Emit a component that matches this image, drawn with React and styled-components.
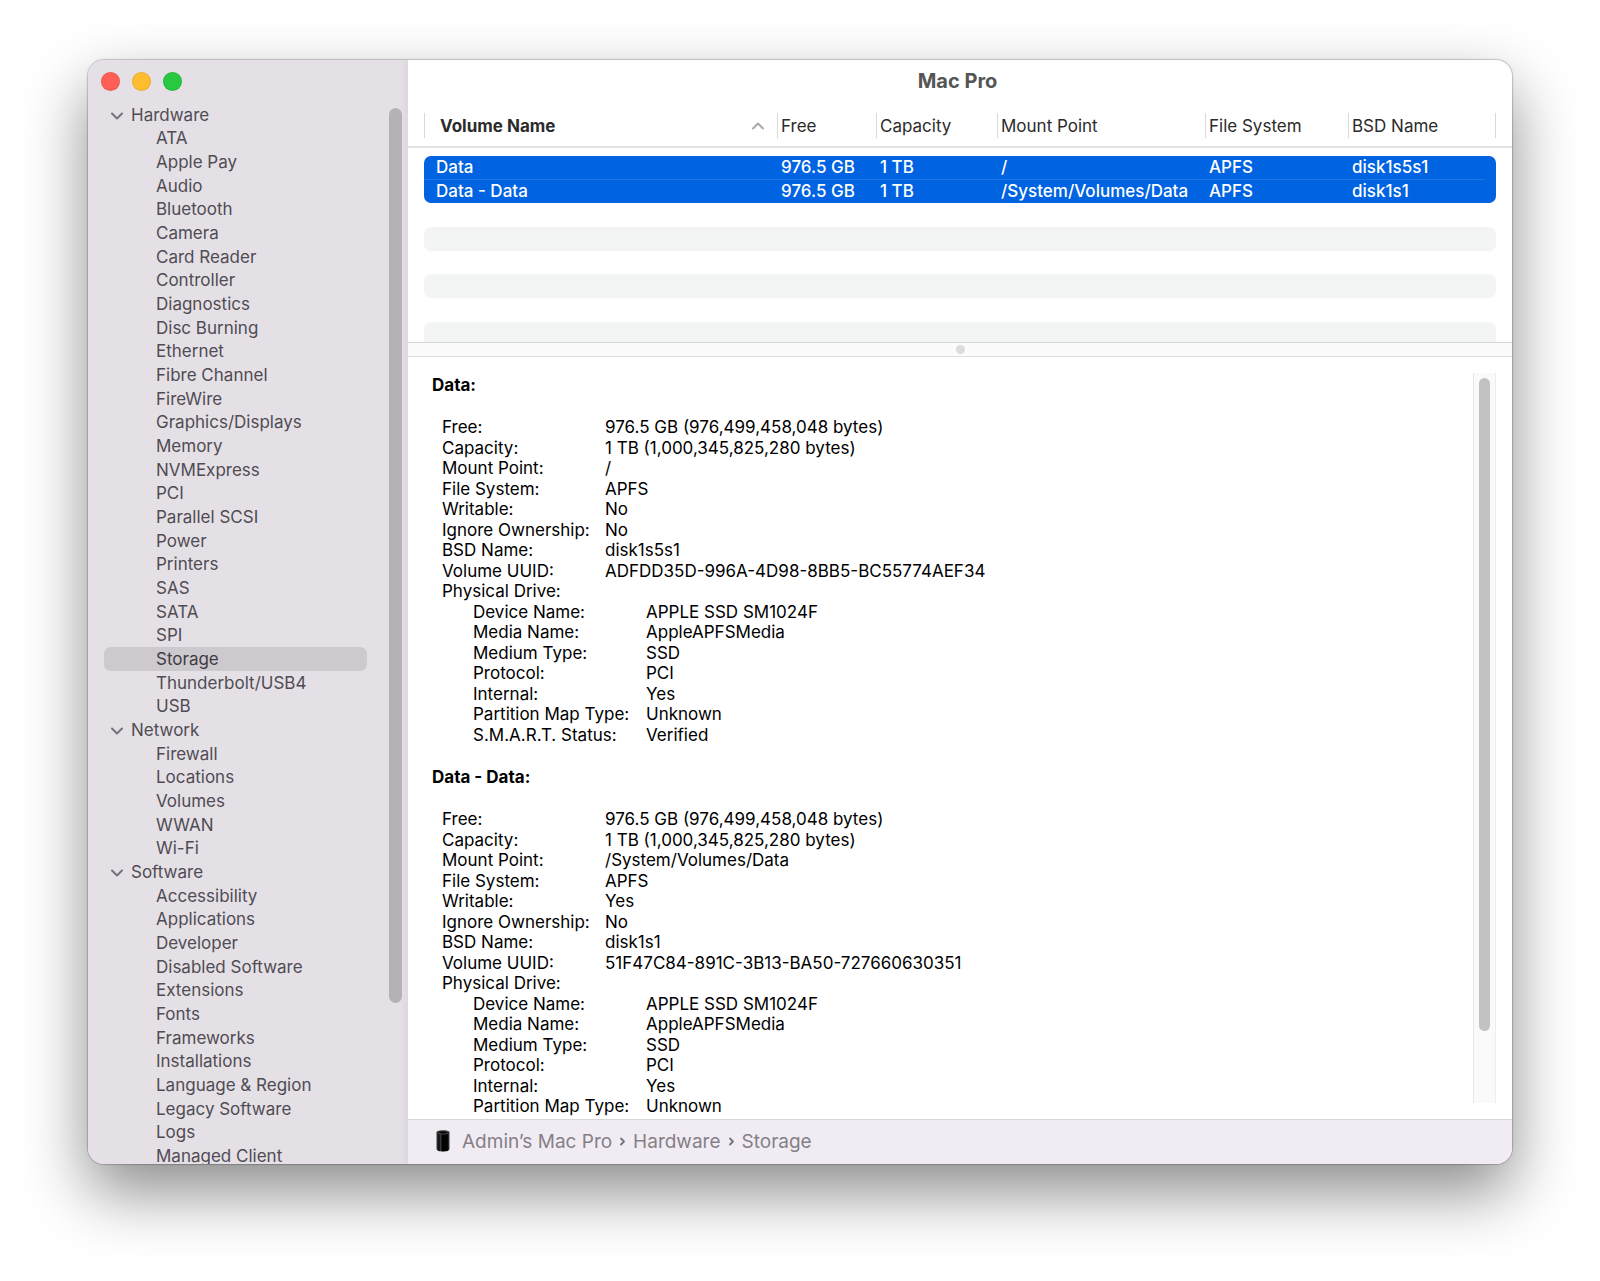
import React, { useState } from 'react';
import styled, { createGlobalStyle } from 'styled-components';

const GlobalStyle = createGlobalStyle`
  * {
    box-sizing: border-box;
  }

  body {
    margin: 0;
    background-color: #fff;
    font-family: Inter, 'Liberation Sans', sans-serif;
    font-size: 17px;
  }

  button {
    border: 0;
    padding: 0;
    background: none;
    font: inherit;
    color: inherit;
    text-align: left;
  }
`;

const Desktop = styled.div`
  display: flex;
  height: 100vh;
  padding: 60px 88px 117px;
`;

const Window = styled.div`
  display: flex;
  flex: 1;
  min-width: 0;
  overflow: hidden;
  border-radius: 16px;
  background-color: #fff;
  box-shadow: 0 0 1px 1px rgba(0, 0, 0, 0.2), 0 28px 64px rgba(0, 0, 0, 0.46);
`;

const Sidebar = styled.aside`
  display: flex;
  flex-direction: column;
  flex: none;
  width: 320px;
  background: linear-gradient(to left, #dcd8de, #e4e0e6 8px);
`;

const TrafficLights = styled.div`
  display: flex;
  flex: none;
  gap: 12px;
  height: 43px;
  padding: 12px 13px;
`;

const Light = styled.button`
  width: 19px;
  height: 19px;
  border-radius: 50%;
  background-color: ${(props) => props.$color};
  box-shadow: inset 0 0 0 1px rgba(0, 0, 0, 0.08);
`;

const SidebarBody = styled.div`
  display: flex;
  flex: 1;
  min-height: 0;
`;

const Tree = styled.nav`
  display: flex;
  flex-direction: column;
  flex: 1;
  overflow: hidden;
  padding-left: 16px;
  color: #504c53;
`;

const TreeRow = styled.button`
  display: flex;
  align-items: center;
  flex: none;
  gap: 8px;
  height: 24px;
  padding-left: ${(props) => (props.$group ? '7px' : '52px')};
  border-radius: 7px;
  color: ${(props) => (props.$selected ? '#403c43' : 'inherit')};
  background-color: ${(props) => (props.$selected ? '#cdc9ce' : 'transparent')};

  &:nth-child(3n + 1) {
    height: 23px;
  }
`;

const SidebarScroll = styled.div`
  flex: none;
  width: 13px;
  margin: 5px 6px 161px 22px;
  border-radius: 7px;
  background-color: #b6b1b7;
`;

const Main = styled.main`
  display: flex;
  flex-direction: column;
  flex: 1;
  min-width: 0;
`;

const Title = styled.h1`
  margin: 0;
  height: 43px;
  padding-right: 5px;
  font-size: 20px;
  font-weight: 700;
  line-height: 43px;
  text-align: center;
  color: #555;
`;

const TablePane = styled.div`
  flex: none;
  height: 239px;
  overflow: hidden;
`;

const Table = styled.table`
  display: block;
`;

const Head = styled.thead`
  display: block;
  padding: 10px 16px 8px;
  border-bottom: 2px solid #e4e4e4;
`;

const Body = styled.tbody`
  display: block;
  padding: 8px 16px 0;
`;

const HeadRow = styled.tr`
  display: grid;
  grid-template-columns: 1fr 99px 121px 208px 143px 148px;
`;

const HeadCell = styled.th`
  display: flex;
  align-items: center;
  justify-content: space-between;
  height: 25px;
  padding: ${(props) => (props.$sorted ? '0 12px 0 15px' : '0 3px')};
  border-left: 1px solid #d9d9d9;
  font-weight: ${(props) => (props.$sorted ? 700 : 400)};
  color: #2b2b2b;

  &:last-child {
    border-right: 1px solid #d9d9d9;
  }
`;

const Row = styled(HeadRow)`
  height: 24px;
  border-radius: 7px;
  background-color: #fff;

  &:nth-child(3n + 2) {
    height: 23px;
  }

  &:nth-child(even) {
    background-color: #f3f4f4;
  }

  &&[aria-selected] {
    color: #fff;
    font-weight: 500;
    background-color: #0063e1;
  }

  &&[aria-selected]:first-child {
    border-radius: 7px 7px 0 0;
    background-image: linear-gradient(#1d74e5, #1d74e5);
    background-position: 0 100%;
    background-repeat: no-repeat;
    background-size: 99% 1px;
  }

  &&[aria-selected]:nth-child(2) {
    border-radius: 0 0 7px 7px;
  }
`;

const Cell = styled.td`
  padding: 0 4px;
  line-height: 23px;
  white-space: nowrap;

  &:first-child {
    padding-left: 12px;
  }
`;

const Splitter = styled.div`
  display: flex;
  align-items: center;
  justify-content: center;
  flex: none;
  height: 15px;
  border-top: 1px solid #d6d6d6;
  border-bottom: 1px solid #dedede;
  background-color: #fbfbfb;
`;

const Knob = styled.span`
  width: 9px;
  height: 9px;
  border-radius: 50%;
  background-color: #dcdcdc;
`;

const DetailPane = styled.div`
  display: flex;
  flex: 1;
  min-height: 0;
  padding: 0 16px 0 24px;
`;

const Details = styled.div`
  flex: 1;
  overflow: hidden;
  padding-top: 18px;
  color: #000;
`;

const VolumeName = styled.h2`
  margin: 0 0 21px;
  font-size: 17px;
  font-weight: 700;
  line-height: 21px;
`;

const Properties = styled.dl`
  margin: 0 0 22px 10px;
`;

const Property = styled.div`
  display: grid;
  grid-template-columns: ${(props) => (props.$nested ? '173px 1fr' : '163px 1fr')};
  padding-left: ${(props) => (props.$nested ? '31px' : '0')};
  line-height: 21px;
  white-space: nowrap;

  &:nth-child(even) {
    line-height: 20px;
  }
`;

const Value = styled.dd`
  margin: 0;
`;

const DetailScroll = styled.div`
  display: flex;
  flex: none;
  width: 23px;
  margin: 16px 0 16px;
  padding: 5px 5px 72px;
  border-left: 1px solid #e6e6e6;
  border-right: 1px solid #ededed;
  background-color: #fafafa;
`;

const DetailThumb = styled.div`
  flex: 1;
  border-radius: 6px;
  background-color: #c2c2c2;
`;

const StatusBar = styled.footer`
  display: flex;
  align-items: center;
  flex: none;
  height: 45px;
  padding: 0 0 2px 28px;
  border-top: 1px solid #d8d4d9;
  background-color: #f1ecf3;
  font-size: 19px;
  color: #858087;
`;

const Crumb = styled.a`
  margin-left: ${(props) => (props.$first ? '12px' : '6px')};
  margin-right: 7px;
  color: inherit;
  text-decoration: none;
`;

const tree = [
  {
    name: 'Hardware',
    items: [
      'ATA', 'Apple Pay', 'Audio', 'Bluetooth', 'Camera', 'Card Reader', 'Controller',
      'Diagnostics', 'Disc Burning', 'Ethernet', 'Fibre Channel', 'FireWire',
      'Graphics/Displays', 'Memory', 'NVMExpress', 'PCI', 'Parallel SCSI', 'Power',
      'Printers', 'SAS', 'SATA', 'SPI', 'Storage', 'Thunderbolt/USB4', 'USB',
    ],
  },
  {
    name: 'Network',
    items: ['Firewall', 'Locations', 'Volumes', 'WWAN', 'Wi-Fi'],
  },
  {
    name: 'Software',
    items: [
      'Accessibility', 'Applications', 'Developer', 'Disabled Software', 'Extensions',
      'Fonts', 'Frameworks', 'Installations', 'Language & Region', 'Legacy Software',
      'Logs', 'Managed Client',
    ],
  },
];

const columns = ['Free', 'Capacity', 'Mount Point', 'File System', 'BSD Name'];

const volumes = [
  {
    name: 'Data',
    mount: '/',
    writable: 'No',
    bsd: 'disk1s5s1',
    uuid: 'ADFDD35D-996A-4D98-8BB5-BC55774AEF34',
    smart: 'Verified',
  },
  {
    name: 'Data - Data',
    mount: '/System/Volumes/Data',
    writable: 'Yes',
    bsd: 'disk1s1',
    uuid: '51F47C84-891C-3B13-BA50-727660630351',
  },
];

const Disclosure = () => (
  <svg width="12" height="24" viewBox="0 0 12 24" fill="none" stroke="#77727a" strokeWidth="2" strokeLinecap="round" strokeLinejoin="round">
    <path d="M1 10.500 6 15.500l5-5" />
  </svg>
);

const SortArrow = () => (
  <svg width="14" height="10" viewBox="0 0 14 10" fill="none" stroke="#a6a6a6" strokeWidth="1.800" strokeLinecap="round" strokeLinejoin="round">
    <path d="M2 7.500l5-5 5 5" />
  </svg>
);

const CrumbArrow = () => (
  <svg width="8" height="12" viewBox="0 0 8 12" fill="none" stroke="#77727a" strokeWidth="1.800" strokeLinecap="round" strokeLinejoin="round">
    <path d="M2 3.500l3 3-3 3" />
  </svg>
);

const MacProIcon = () => (
  <svg width="14" height="22" viewBox="0 0 14 22">
    <defs>
      <linearGradient id="shell" x1="0" x2="1" y1="0" y2="0">
        <stop offset="0" stopColor="#3c3c40" />
        <stop offset="0.2" stopColor="#0c0c0e" />
        <stop offset="0.32" stopColor="#3a3b40" />
        <stop offset="0.45" stopColor="#000" />
        <stop offset="0.85" stopColor="#050505" />
        <stop offset="1" stopColor="#46464a" />
      </linearGradient>
    </defs>
    <path d="M.5 2.500C.5 1 3 .5 7 .5s6.500.5 6.500 2v16.500c0 1.700-3 2.500-6.500 2.500S.5 20.700.5 19z" fill="url(#shell)" />
    <ellipse cx="7" cy="2.400" rx="6" ry="1.600" fill="#1b1b1d" stroke="#606266" strokeWidth="0.7" />
    <ellipse cx="7" cy="2.500" rx="3.600" ry="0.800" fill="#000" />
  </svg>
);

const VolumeDetails = ({ volume }) => {
  const properties = [
    ['Free', '976.5 GB (976,499,458,048 bytes)'],
    ['Capacity', '1 TB (1,000,345,825,280 bytes)'],
    ['Mount Point', volume.mount],
    ['File System', 'APFS'],
    ['Writable', volume.writable],
    ['Ignore Ownership', 'No'],
    ['BSD Name', volume.bsd],
    ['Volume UUID', volume.uuid],
    ['Physical Drive', ''],
  ];

  const drive = [
    ['Device Name', 'APPLE SSD SM1024F'],
    ['Media Name', 'AppleAPFSMedia'],
    ['Medium Type', 'SSD'],
    ['Protocol', 'PCI'],
    ['Internal', 'Yes'],
    ['Partition Map Type', 'Unknown'],
  ];

  if (volume.smart) {
    drive.push(['S.M.A.R.T. Status', volume.smart]);
  }

  return (
    <section>
      <VolumeName>{volume.name}:</VolumeName>
      <Properties>
        {properties.map(([label, value]) => (
          <Property key={label}>
            <dt>{label}:</dt>
            <Value>{value}</Value>
          </Property>
        ))}
        {drive.map(([label, value]) => (
          <Property key={label} $nested>
            <dt>{label}:</dt>
            <Value>{value}</Value>
          </Property>
        ))}
      </Properties>
    </section>
  );
};

const App = () => {
  const [selected, setSelected] = useState('Storage');

  return (
    <>
      <GlobalStyle />
      <Desktop>
        <Window>
          <Sidebar>
            <TrafficLights>
              <Light $color="#ff5f57" aria-label="Close" />
              <Light $color="#febc2e" aria-label="Minimize" />
              <Light $color="#28c840" aria-label="Zoom" />
            </TrafficLights>
            <SidebarBody>
              <Tree>
                {tree.map((group) => (
                  <React.Fragment key={group.name}>
                    <TreeRow $group>
                      <Disclosure />
                      {group.name}
                    </TreeRow>
                    {group.items.map((item) => (
                      <TreeRow
                        key={item}
                        $selected={item === selected}
                        onClick={() => setSelected(item)}
                      >
                        {item}
                      </TreeRow>
                    ))}
                  </React.Fragment>
                ))}
              </Tree>
              <SidebarScroll />
            </SidebarBody>
          </Sidebar>
          <Main>
            <Title>Mac Pro</Title>
            <TablePane>
              <Table>
                <Head>
                  <HeadRow>
                    <HeadCell $sorted>
                      Volume Name
                      <SortArrow />
                    </HeadCell>
                    {columns.map((column) => (
                      <HeadCell key={column}>{column}</HeadCell>
                    ))}
                  </HeadRow>
                </Head>
                <Body>
                  {volumes.map((volume) => (
                    <Row key={volume.name} aria-selected="true">
                      <Cell>{volume.name}</Cell>
                      <Cell>976.5 GB</Cell>
                      <Cell>1 TB</Cell>
                      <Cell>{volume.mount}</Cell>
                      <Cell>APFS</Cell>
                      <Cell>{volume.bsd}</Cell>
                    </Row>
                  ))}
                  {/* empty rows keep the stripes going down to the splitter */}
                  {[3, 4, 5, 6, 7, 8].map((n) => (
                    <Row key={n} />
                  ))}
                </Body>
              </Table>
            </TablePane>
            <Splitter>
              <Knob />
            </Splitter>
            <DetailPane>
              <Details>
                {volumes.map((volume) => (
                  <VolumeDetails key={volume.name} volume={volume} />
                ))}
              </Details>
              <DetailScroll>
                <DetailThumb />
              </DetailScroll>
            </DetailPane>
            <StatusBar>
              <MacProIcon />
              <Crumb href="#mac" $first>Admin’s Mac Pro</Crumb>
              <CrumbArrow />
              <Crumb href="#hardware">Hardware</Crumb>
              <CrumbArrow />
              <Crumb href="#storage">Storage</Crumb>
            </StatusBar>
          </Main>
        </Window>
      </Desktop>
    </>
  );
};

export default App;
